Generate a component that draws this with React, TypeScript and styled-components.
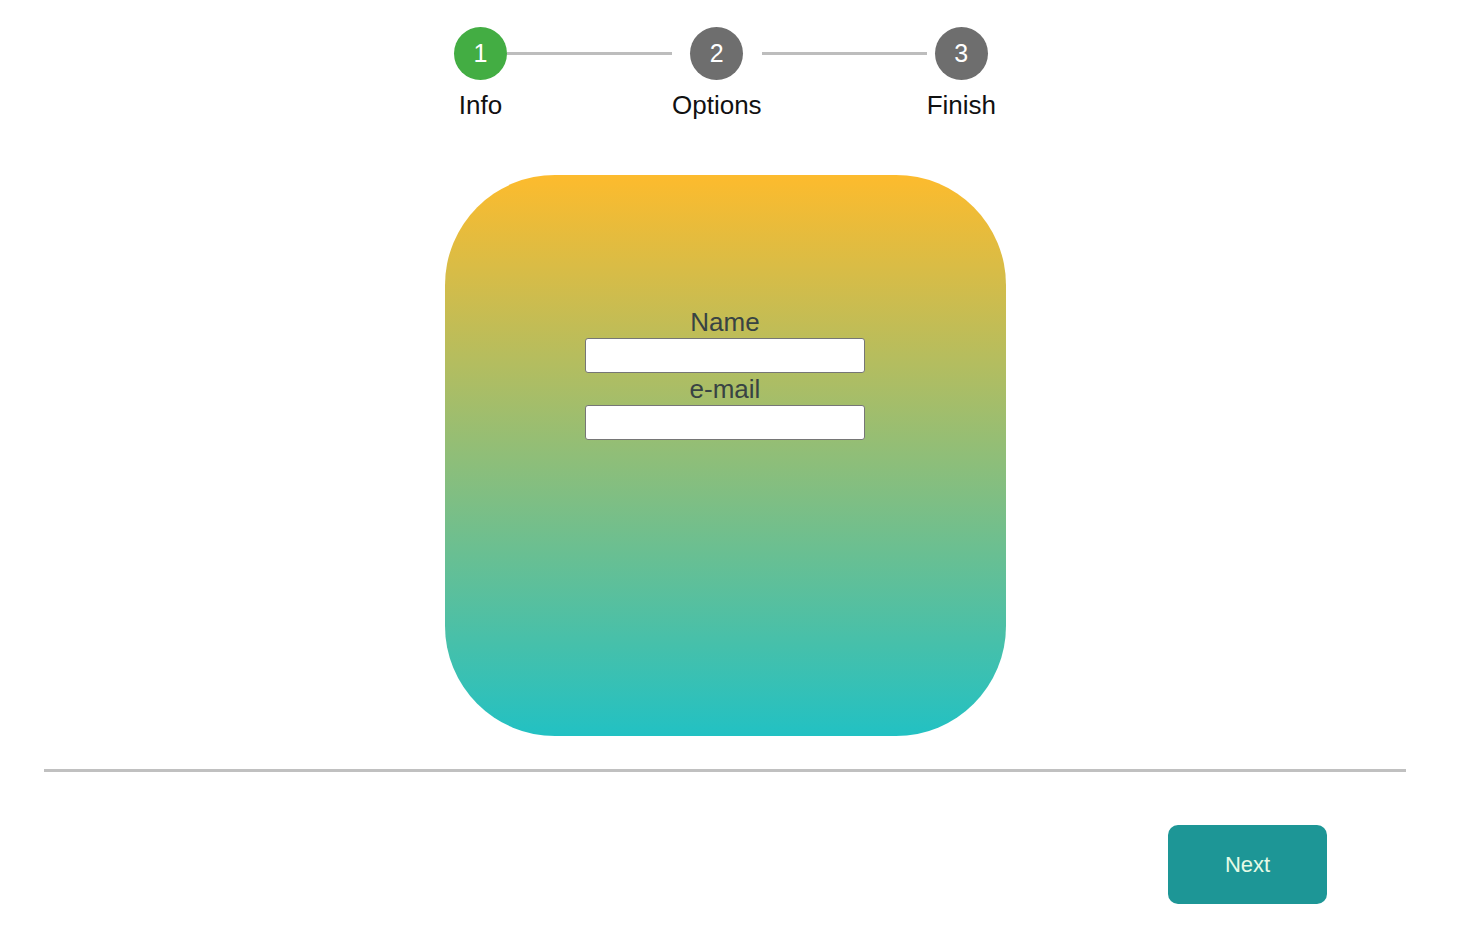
import React, { useState } from 'react';
import styled, { createGlobalStyle } from 'styled-components';

const GlobalStyle = createGlobalStyle`
  body {
    margin: 0;
    background: #ffffff;
    font-family: "Liberation Sans", Arial, sans-serif;
  }
`;

const steps = ['Info', 'Options', 'Finish'];

const App = () => {
  const [current] = useState(0);
  const [form, setForm] = useState({ name: '', email: '' });

  const handleChange = (field: string) => (e: React.ChangeEvent<HTMLInputElement>) => {
    setForm({ ...form, [field]: e.target.value });
  };

  return (
    <Page>
      <GlobalStyle />
      <Stepper>
        {steps.map((label, i) => (
          <React.Fragment key={label}>
            {i > 0 && <Connector />}
            <Step>
              <Circle active={i === current}>{i + 1}</Circle>
              <StepLabel>{label}</StepLabel>
            </Step>
          </React.Fragment>
        ))}
      </Stepper>

      <Card>
        <Field>
          <Label htmlFor="name">Name</Label>
          <TextInput id="name" value={form.name} onChange={handleChange('name')} />
        </Field>
        <Field>
          <Label htmlFor="email">e-mail</Label>
          <TextInput id="email" value={form.email} onChange={handleChange('email')} />
        </Field>
      </Card>

      <Divider />

      <Footer>
        <NextButton>Next</NextButton>
      </Footer>
    </Page>
  );
};

export default App;

const Page = styled.div`
  width: 1450px;
  padding-top: 27px;
  display: flex;
  flex-direction: column;
  align-items: center;
`;

const Stepper = styled.div`
  display: flex;
  align-items: flex-start;
  height: 121px;
`;

const Step = styled.div`
  display: flex;
  flex-direction: column;
  align-items: center;
`;

const Circle = styled.div<{ active: boolean }>`
  width: 53px;
  height: 53px;
  border-radius: 50%;
  background: ${({ active }) => (active ? '#43ad43' : '#6e6e6e')};
  color: #ffffff;
  font-size: 25px;
  display: flex;
  align-items: center;
  justify-content: center;
`;

const StepLabel = styled.div`
  margin-top: 10px;
  font-size: 26px;
  line-height: 30px;
  color: #111111;
`;

const Connector = styled.div`
  width: 165px;
  height: 3px;
  margin-top: 25px;
  background: #bdbdbd;
`;

const Card = styled.div`
  margin-top: 27px;
  width: 561px;
  height: 561px;
  box-sizing: border-box;
  padding-top: 133px;
  border-radius: 110px;
  background: linear-gradient(180deg, #fdbb2d 0%, #22c1c3 100%);
  display: flex;
  flex-direction: column;
  align-items: center;
  gap: 2px;
`;

const Field = styled.div`
  display: flex;
  flex-direction: column;
  align-items: center;
  gap: 2px;
`;

const Label = styled.label`
  font-size: 26px;
  line-height: 28px;
  color: #384343;
`;

const TextInput = styled.input`
  width: 280px;
  height: 35px;
  box-sizing: border-box;
  border: 1px solid #767676;
  border-radius: 3px;
  background: #ffffff;
  padding: 0 6px;
  font-size: 16px;
  outline: none;
`;

const Divider = styled.hr`
  width: 1362px;
  height: 3px;
  margin: 33px 0 0;
  border: none;
  background: #c0c0c0;
`;

const Footer = styled.div`
  align-self: stretch;
  display: flex;
  justify-content: flex-end;
  padding: 53px 123px 0 0;
`;

const NextButton = styled.button`
  width: 159px;
  height: 79px;
  border: none;
  border-radius: 10px;
  background: #1d9696;
  color: #e6fbe6;
  font-family: "Liberation Sans", Arial, sans-serif;
  font-size: 22px;
  cursor: pointer;
`;
